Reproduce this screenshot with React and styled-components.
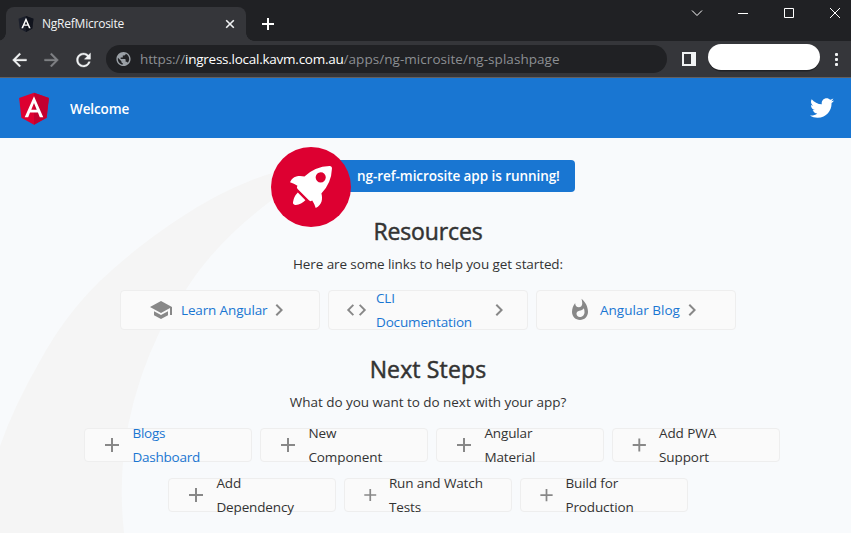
import React from "react";
import styled, { createGlobalStyle } from "styled-components";
import { FaTwitter } from "react-icons/fa";

const GlobalStyle = createGlobalStyle`
  * { box-sizing: border-box; }
  body {
    margin: 0;
    overflow: hidden;
    font-family: "Open Sans", "Noto Sans", sans-serif;
    font-size: 13.5px;
    color: #333;
  }
  svg { display: block; flex: none; }
`;

const Window = styled.div`
  display: flex;
  flex-direction: column;
  width: 851px;
  height: 533px;
  overflow: hidden;
  background: #f8fafc;
`;

const TabStrip = styled.div`
  display: flex;
  justify-content: space-between;
  height: 41px;
  flex: none;
  background: #202124;
`;

const TabGroup = styled.div`
  display: flex;
  align-items: flex-end;
  padding-left: 6px;
`;

const Tab = styled.div`
  position: relative;
  display: flex;
  align-items: center;
  width: 240px;
  height: 34px;
  padding: 0 10px 0 12px;
  border-radius: 8px 8px 0 0;
  background: #35363a;
  color: #f1f3f4;

  &::before,
  &::after {
    content: "";
    position: absolute;
    bottom: 0;
    width: 8px;
    height: 8px;
  }
  &::before {
    right: 100%;
    background: radial-gradient(circle at 0 0, transparent 7.5px, #35363a 8px);
  }
  &::after {
    left: 100%;
    background: radial-gradient(circle at 100% 0, transparent 7.5px, #35363a 8px);
  }
`;

const TabTitle = styled.span`
  flex: 1;
  margin-left: 8px;
  font-size: 12px;
  letter-spacing: -0.23px;
  line-height: 16px;
`;

const NewTab = styled.div`
  display: flex;
  align-items: center;
  height: 34px;
  margin-left: 15px;
`;

const WindowControls = styled.div`
  display: flex;
  align-items: flex-start;
  gap: 30px;
  padding: 5px 8px 0 0;
`;

const BrowserBar = styled.div`
  display: flex;
  align-items: flex-start;
  height: 37px;
  flex: none;
  padding: 3px 13px 0 9px;
  background: #35363a;
  border-bottom: 1px solid #655f5d;
`;

const NavButtons = styled.div`
  display: flex;
  align-items: center;
  gap: 11px;
  height: 31px;
  margin-right: 12px;
`;

const AddressBar = styled.div`
  display: flex;
  align-items: center;
  width: 561px;
  height: 28px;
  margin-top: 1px;
  padding-left: 9px;
  border-radius: 14px;
  background: #202124;
  color: #8c8f93;
  white-space: nowrap;
`;

const Url = styled.div`
  margin-left: 8px;
  line-height: 20px;
`;

const UrlPart = styled.span`
  color: ${(p) => (p.$host ? "#fff" : "#8c8f93")};
  letter-spacing: ${(p) => p.$track}px;
`;

const BarTools = styled.div`
  display: flex;
  align-items: flex-start;
  flex: 1;
  padding-left: 15px;
`;

const SidePanelIcon = styled.div`
  width: 14px;
  height: 14px;
  margin-top: 8px;
  border: solid #f1f3f4;
  border-width: 2px 5px 2px 2px;
`;

const ProfilePill = styled.div`
  width: 112px;
  height: 26px;
  margin-left: 12px;
  border-radius: 13px;
  background: #fff;
  box-shadow: 0 2px 0 -0.5px #202124;
`;

const MenuDots = styled.div`
  display: flex;
  flex-direction: column;
  gap: 2px;
  margin: 9px 0 0 auto;
`;

const Dot = styled.i`
  width: 3px;
  height: 3px;
  border-radius: 1px;
  background: #f1f3f4;
`;

const AppToolbar = styled.header`
  display: flex;
  align-items: center;
  height: 60px;
  flex: none;
  padding: 0 17px 0 14px;
  background: #1976d2;
  color: #fff;
  font-weight: 600;
`;

const Brand = styled.span`
  flex: 1;
  margin-left: 16px;
  padding-top: 2px;
  letter-spacing: -0.1px;
  line-height: 20px;
`;

const Content = styled.main`
  position: relative;
  display: flex;
  flex-direction: column;
  align-items: center;
  flex: 1;
  padding: 9px 0 0 5px;
`;

const Smoke = styled.svg`
  position: absolute;
  top: 0;
  left: 0;
`;

const HighlightCard = styled.div`
  position: relative;
  display: flex;
  align-items: flex-start;
  width: 304px;
  height: 80px;
  margin-right: 10px;
`;

const HighlightLabel = styled.div`
  flex: 1;
  height: 32px;
  margin: 13px 0 0 -20px;
  padding-left: 26px;
  border-radius: 4px;
  background: #1976d2;
  color: #fff;
  font-weight: 600;
  letter-spacing: -0.06px;
  line-height: 32px;
  white-space: nowrap;
`;

const Rocket = styled.svg`
  position: relative;
  z-index: 1;
`;

const Section = styled.section`
  position: relative;
  display: flex;
  flex-direction: column;
  align-items: center;
  margin-top: ${(p) => p.$top}px;
`;

const Heading = styled.h2`
  margin: 0;
  font-size: 23px;
  font-weight: 400;
  letter-spacing: ${(p) => p.$track}px;
  line-height: 32px;
  -webkit-text-stroke: 0.5px #333;
`;

const Lead = styled.p`
  margin: 5px 0 14px;
  letter-spacing: ${(p) => p.$track}px;
  line-height: 24px;
`;

const CardRow = styled.div`
  display: flex;
  gap: 8px;
  margin: 0 0 16px ${(p) => p.$shift || 0}px;
`;

const Card = styled.div`
  display: flex;
  align-items: center;
  justify-content: ${(p) => (p.$small ? "flex-start" : "center")};
  width: ${(p) => (p.$small ? 168 : 200)}px;
  height: ${(p) => (p.$small ? 34 : 40)}px;
  padding: 0 ${(p) => (p.$small ? 15.4 : 16)}px;
  border: 1px solid #eee;
  border-radius: 4px;
  background: #fafafa;
  color: #888;
`;

const CardLabel = styled.span`
  width: ${(p) => (p.$width ? `${p.$width}px` : "auto")};
  margin-left: 8px;
  color: ${(p) => (p.$link ? "#1976d2" : "#333")};
  letter-spacing: ${(p) => p.$track || 0}px;
  line-height: 24px;
  white-space: pre;
`;

const glyphs = {
  school: "M5 13.18v4L12 21l7-3.82v-4L12 17l-7-3.82zM12 3L1 9l11 6 9-4.91V17h2V9L12 3z",
  code: "M9.4 16.6L4.8 12l4.6-4.6L8 6l-6 6 6 6 1.4-1.4zm5.2 0l4.6-4.6-4.6-4.6L16 6l6 6-6 6-1.4-1.4z",
  flame:
    "M13.5.67s.74 2.65.74 4.8c0 2.06-1.35 3.73-3.41 3.73-2.07 0-3.63-1.67-3.63-3.73l.03-.36C5.21 7.51 4 10.62 4 14c0 4.42 3.58 8 8 8s8-3.58 8-8C20 8.61 17.41 3.8 13.5.67zM11.71 19c-1.78 0-3.22-1.4-3.22-3.14 0-1.62 1.05-2.76 2.81-3.12 1.77-.36 3.6-1.21 4.62-2.58.39 1.29.59 2.65.59 4.04 0 2.65-2.15 4.8-4.8 4.8z",
  chevron: "M10 6L8.59 7.41 13.17 12l-4.58 4.59L10 18l6-6z",
  plus: "M19 13h-6v6h-2v-6H5v-2h6V5h2v6h6v2z",
  back: "M20 11H7.83l5.59-5.59L12 4l-8 8 8 8 1.41-1.41L7.83 13H20v-2z",
  forward: "M12 4l-1.41 1.41L16.17 11H4v2h12.17l-5.58 5.59L12 20l8-8z",
  reload:
    "M17.65 6.35C16.2 4.9 14.21 4 12 4c-4.42 0-7.99 3.58-7.99 8s3.57 8 7.99 8c3.73 0 6.84-2.55 7.73-6h-2.08c-.82 2.33-3.04 4-5.65 4-3.31 0-6-2.69-6-6s2.69-6 6-6c1.66 0 3.14.69 4.22 1.78L13 11h7V4l-2.35 2.35z",
  globe:
    "M12 2C6.48 2 2 6.48 2 12s4.48 10 10 10 10-4.48 10-10S17.52 2 12 2zm-1 17.93c-3.95-.49-7-3.85-7-7.93 0-.62.08-1.21.21-1.79L9 15v1c0 1.1.9 2 2 2v1.93zm6.9-2.54c-.26-.81-1-1.39-1.9-1.39h-1v-3c0-.55-.45-1-1-1H8v-2h2c.55 0 1-.45 1-1V7h2c1.1 0 2-.9 2-2v-.41c2.93 1.19 5 4.06 5 7.41 0 2.08-.8 3.97-2.1 5.39z",
};

const Glyph = ({ name, size = 24, color = "currentColor", bold = 0 }) => (
  <svg width={size} height={24} viewBox="0 0 24 24" fill={color} stroke={color} strokeWidth={bold}>
    <path d={glyphs[name]} />
  </svg>
);

const AngularShield = ({ size, left = "#dd0031", right = "#c3002f", box = "0 0 250 250" }) => (
  <svg width={size} height={size} viewBox={box}>
    <path fill={left} d="M125 30 31.9 63.2l14.2 123.1L125 230l78.9-43.7 14.2-123.1z" />
    <path fill={right} d="M125 30v200l78.9-43.7 14.2-123.1z" />
    <path
      fill="#fff"
      d="M125 52.1 66.8 182.6h21.7l11.7-29.2h49.4l11.7 29.2H183L125 52.1zm17 83.3h-34l17-40.9 17 40.9z"
    />
  </svg>
);

const ControlIcon = ({ d }) => (
  <svg width="16" height="16" viewBox="0 0 16 16" fill="none" stroke="#fff">
    <path d={d} />
  </svg>
);

const resources = [
  { icon: "school", text: "Learn Angular", track: -0.14, width: 86 },
  { icon: "code", size: 23, text: "CLI\nDocumentation", track: -0.15, width: 111 },
  { icon: "flame", text: "Angular Blog", track: 0, width: 80 },
];

const stepRows = [
  {
    shift: 8,
    items: [
      { text: "Blogs\nDashboard", link: true, track: -0.22 },
      { text: "New\nComponent", track: -0.08 },
      { text: "Angular\nMaterial", track: -0.12 },
      { text: "Add PWA\nSupport", size: 22.6, track: -0.08 },
    ],
  },
  {
    items: [
      { text: "Add\nDependency", track: -0.13 },
      { text: "Run and Watch\nTests", size: 20.5, track: -0.12 },
      { text: "Build for\nProduction", size: 21, track: -0.12 },
    ],
  },
];

export default function App() {
  return (
    <Window>
      <GlobalStyle />
      <TabStrip>
        <TabGroup>
          <Tab>
            <AngularShield size={16} left="#1b1f2b" right="#10131c" box="25 30 200 200" />
            <TabTitle>NgRefMicrosite</TabTitle>
            <svg width="12" height="12" viewBox="0 0 12 12" stroke="#f1f3f4" strokeWidth="1.6">
              <path d="M2.2 2.2l7.6 7.6M9.8 2.2L2.2 9.8" />
            </svg>
          </Tab>
          <NewTab>
            <svg width="14" height="14" viewBox="0 0 14 14" stroke="#fff" strokeWidth="2">
              <path d="M1 7h12M7 1v12" />
            </svg>
          </NewTab>
        </TabGroup>
        <WindowControls>
          <ControlIcon d="M3 5.5l5 5 5-5" />
          <ControlIcon d="M3 8.5h10" />
          <ControlIcon d="M3.5 3.5h9v9h-9z" />
          <ControlIcon d="M3 3l10 10M13 3L3 13" />
        </WindowControls>
      </TabStrip>
      <BrowserBar>
        <NavButtons>
          <Glyph name="back" size={21} color="#f1f3f4" bold={0.4} />
          <Glyph name="forward" size={21} color="#808185" bold={0.4} />
          <Glyph name="reload" size={21} color="#f1f3f4" bold={0.4} />
        </NavButtons>
        <AddressBar>
          <Glyph name="globe" size={17} color="#9aa0a6" />
          <Url>
            <UrlPart $track={-0.13}>https://</UrlPart>
            <UrlPart $host $track={-0.25}>ingress.local.kavm.com.au</UrlPart>
            <UrlPart $track={0.05}>/apps/ng-microsite/ng-splashpage</UrlPart>
          </Url>
        </AddressBar>
        <BarTools>
          <SidePanelIcon />
          <ProfilePill />
          <MenuDots>
            <Dot />
            <Dot />
            <Dot />
          </MenuDots>
        </BarTools>
      </BrowserBar>
      <AppToolbar>
        <AngularShield size={40} />
        <Brand>Welcome</Brand>
        <FaTwitter size={24} />
      </AppToolbar>
      <Content>
        <Smoke width="851" height="395" viewBox="0 0 851 395" fill="#f5f5f5">
          <path d="M310 26C292 30 270 35 252 42Q216 56 180 80Q137 108 100 143Q65 177 40 223Q14 268 0 308V395H124Q118 338 128 288Q138 238 160 193L187 150Q217 103 272 62Q294 44 310 26Z" />
        </Smoke>
        <HighlightCard>
          <Rocket width="80" height="80" viewBox="0 0 101.678 101.678">
            <circle cx="50.839" cy="50.839" r="50.839" fill="#dd0031" />
            <g transform="translate(24.185 24.185)" fill="#fff">
              <path
                d="M3.4,42.615a3.084,3.084,0,0,0,3.553,3.553,21.419,21.419,0,0,0,12.215-6.107L9.511,30.4A21.419,21.419,0,0,0,3.4,42.615Z"
                transform="translate(0.371 3.363)"
              />
              <path d="M53.3,3.221A3.09,3.09,0,0,0,50.081,0,48.227,48.227,0,0,0,18.322,13.437c-6-1.666-14.991-1.221-18.322,7.218A33.892,33.892,0,0,1,9.439,25.1l-.333.666a3.013,3.013,0,0,0,.555,3.553L23.985,43.641a2.9,2.9,0,0,0,3.553.555l.666-.333A33.892,33.892,0,0,1,32.647,53.3c8.55-3.664,8.884-12.326,7.218-18.322A48.227,48.227,0,0,0,53.3,3.221ZM34.424,9.772a6.439,6.439,0,1,1,9.106,9.106,6.368,6.368,0,0,1-9.106,0A6.467,6.467,0,0,1,34.424,9.772Z" />
            </g>
          </Rocket>
          <HighlightLabel>ng-ref-microsite app is running!</HighlightLabel>
        </HighlightCard>
        <Section $top={-12}>
          <Heading $track={-0.14}>Resources</Heading>
          <Lead $track={-0.1}>Here are some links to help you get started:</Lead>
          <CardRow>
            {resources.map((r) => (
              <Card key={r.text}>
                <Glyph name={r.icon} size={r.size} />
                <CardLabel $link $track={r.track} $width={r.width}>{r.text}</CardLabel>
                <Glyph name="chevron" />
              </Card>
            ))}
          </CardRow>
        </Section>
        <Section $top={7}>
          <Heading $track={0.15}>Next Steps</Heading>
          <Lead $track={-0.03}>What do you want to do next with your app?</Lead>
          {stepRows.map((row, i) => (
            <CardRow key={i} $shift={row.shift}>
              {row.items.map((s) => (
                <Card key={s.text} $small>
                  <Glyph name="plus" size={s.size} />
                  <CardLabel $link={s.link} $track={s.track}>{s.text}</CardLabel>
                </Card>
              ))}
            </CardRow>
          ))}
        </Section>
      </Content>
    </Window>
  );
}
